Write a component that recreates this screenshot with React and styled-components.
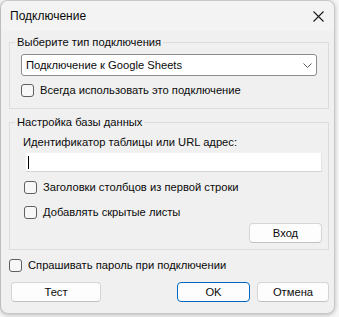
import React from "react";
import styled, { createGlobalStyle } from "styled-components";

const Global = createGlobalStyle`
  html, body { margin: 0; padding: 0; }
  body {
    background: #f6f6f6;
    font-family: "Liberation Sans", "Segoe UI", Arial, sans-serif;
    font-size: 11.2px;
    color: #0a0a0a;
  }
  * { box-sizing: border-box; }
`;

const Page = styled.div`
  width: 339px;
  height: 317px;
  padding: 0 4px 3px 0;
`;

const Dialog = styled.div`
  width: 335px;
  height: 314px;
  background: #f0f0f0;
  border: 1px solid #c8c8c8;
  border-left-color: #bdbdbd;
  border-radius: 8px;
  box-shadow: 0 1px 4px rgba(0, 0, 0, 0.25);
  overflow: hidden;
  display: flex;
  flex-direction: column;
`;

const TitleBar = styled.div`
  height: 30px;
  flex: none;
  background: #f3f3f3;
  display: flex;
  align-items: center;
  justify-content: space-between;
  padding: 0 6px 0 9px;
`;

const Title = styled.span`
  font-size: 12px;
  line-height: 16px;
  color: #0a0a0a;
`;

const CloseBtn = styled.button`
  border: none;
  background: transparent;
  width: 20px;
  height: 20px;
  padding: 0;
  display: flex;
  align-items: center;
  justify-content: center;
`;

const Body = styled.div`
  flex: 1;
  display: flex;
  flex-direction: column;
  padding: 3px 5px 0 8px;
`;

const Group = styled.fieldset`
  margin: 0 0 5px 0;
  border: 1px solid #dcdcdc;
  border-radius: 0;
  padding: ${(p) => p.$pad};
  display: flex;
  flex-direction: column;
  min-width: 0;
`;

const Legend = styled.legend`
  padding: 0 2px;
  margin-left: ${(p) => p.$shift}px;
  line-height: 16px;
  font-size: 11.2px;
  color: #0a0a0a;
`;

const Select = styled.div`
  height: 22px;
  background: #ffffff;
  border: 1px solid #8c8c8c;
  border-radius: 3px;
  display: flex;
  align-items: center;
  justify-content: space-between;
  padding: 0 4px 0 4px;
`;

const SelectText = styled.span`
  line-height: 16px;
`;

const CheckRow = styled.label`
  display: flex;
  align-items: center;
  gap: 6px;
  height: 16px;
  line-height: 16px;
  margin: ${(p) => p.$margin || "0"};
`;

const Box = styled.span`
  width: 13px;
  height: 13px;
  flex: none;
  border: 1px solid #5f5f5f;
  border-radius: 3px;
  background: #f7f7f7;
`;

const FieldLabel = styled.div`
  line-height: 16px;
`;

const TextInput = styled.div`
  height: 20px;
  margin: 2px 0 0 2px;
  background: #ffffff;
  border: 1px solid #f2f2f2;
  border-bottom-color: #d6d6d6;
  border-right-color: #e4e4e4;
  display: flex;
  align-items: center;
  padding-left: 2px;
`;

const Caret = styled.span`
  width: 1px;
  height: 13px;
  background: #000;
`;

const ButtonRight = styled.div`
  display: flex;
  justify-content: flex-end;
  margin-top: 3px;
`;

const Button = styled.button`
  font-family: inherit;
  font-size: 11.2px;
  color: #0a0a0a;
  height: 20px;
  width: ${(p) => p.$w}px;
  background: #fdfdfd;
  border: 1px solid ${(p) => (p.$primary ? "#0067c0" : "#d5d5d5")};
  border-bottom-color: ${(p) => (p.$primary ? "#0067c0" : "#c2c2c2")};
  border-radius: 4px;
  padding: 0;
  line-height: 16px;
`;

const Footer = styled.div`
  display: flex;
  align-items: center;
  padding: 9px 0 0 2px;
  gap: 7px;
`;

const Spacer = styled.div`
  flex: 1;
`;

function Chevron() {
  return (
    <svg width="9" height="5" viewBox="0 0 9 5">
      <path d="M0.5 0.5 L4.5 4.5 L8.5 0.5" fill="none" stroke="#5a5a5a" strokeWidth="1" />
    </svg>
  );
}

function CloseIcon() {
  return (
    <svg width="11" height="11" viewBox="0 0 11 11">
      <path d="M0.5 0.5 L10.5 10.5 M10.5 0.5 L0.5 10.5" stroke="#1b1b1b" strokeWidth="1.1" fill="none" />
    </svg>
  );
}

function Check({ children, margin }) {
  return (
    <CheckRow $margin={margin}>
      <Box />
      <span>{children}</span>
    </CheckRow>
  );
}

export default function App() {
  return (
    <>
      <Global />
      <Page>
        <Dialog>
          <TitleBar>
            <Title>Подключение</Title>
            <CloseBtn aria-label="Закрыть">
              <CloseIcon />
            </CloseBtn>
          </TitleBar>
          <Body>
            <Group $pad="4px 11px 10px 11px">
              <Legend $shift={-6}>Выберите тип подключения</Legend>
              <Select>
                <SelectText>Подключение к Google Sheets</SelectText>
                <Chevron />
              </Select>
              <Check margin="6px 0 0 0">Всегда использовать это подключение</Check>
            </Group>
            <Group $pad="4px 6px 6px 13px">
              <Legend $shift={-8}>Настройка базы данных</Legend>
              <FieldLabel>Идентификатор таблицы или URL адрес:</FieldLabel>
              <TextInput>
                <Caret />
              </TextInput>
              <Check margin="7px 0 0 1px">Заголовки столбцов из первой строки</Check>
              <Check margin="9px 0 0 1px">Добавлять скрытые листы</Check>
              <ButtonRight>
                <Button $w={73}>Вход</Button>
              </ButtonRight>
            </Group>
            <Check margin="2px 0 0 0">Спрашивать пароль при подключении</Check>
            <Footer>
              <Button $w={90}>Тест</Button>
              <Spacer />
              <Button $w={73} $primary>OK</Button>
              <Button $w={72}>Отмена</Button>
            </Footer>
          </Body>
        </Dialog>
      </Page>
    </>
  );
}
